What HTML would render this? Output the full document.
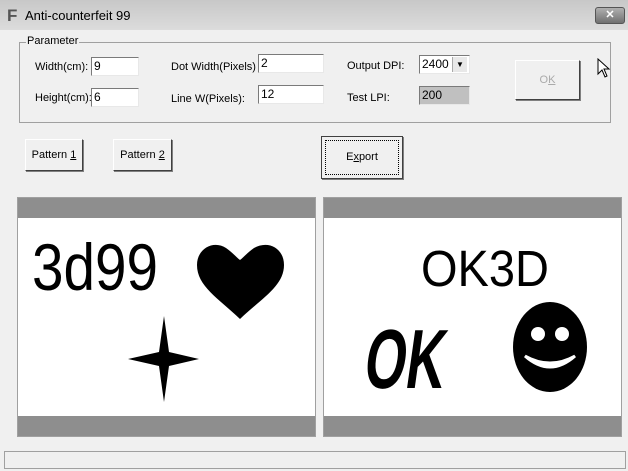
<!DOCTYPE html><html><head><style>
body{margin:0;width:628px;height:471px;background:#f0f0f0;font-family:"Liberation Sans",sans-serif;font-size:11px;position:relative;overflow:hidden}
.a{position:absolute}
.tb{left:0;top:0;width:628px;height:30px;background:linear-gradient(#c8c8c8,#dcdcdc)}
.in{background:#fff;border:1px solid;border-color:#7a7a7a #e8e8e8 #e8e8e8 #7a7a7a;height:17px;line-height:17px;padding-left:2px;font-size:12px}
.btn{border:1px solid;border-color:#fff #404040 #404040 #fff;box-shadow:1px 1px 0 #808080;background:#f0f0f0;text-align:center;line-height:30px}
.pan{background:#fff;border:1px solid #a0a0a0}
.bar{position:absolute;left:0;right:0;height:20px;background:#8e8e8e}
</style></head><body>
<div class="a tb"></div>
<div class="a" style="left:7px;top:6px;font:bold 17px 'Liberation Sans';color:#555">F</div>
<div class="a" style="left:25px;top:8px;font-size:13px">Anti-counterfeit 99</div>
<div class="a" style="left:595px;top:7px;width:28px;height:15px;background:linear-gradient(#b0b0b0,#707070);border:1px solid #555;border-radius:3px;color:#fff;text-align:center;font:bold 11px/15px 'Liberation Sans'">✕</div>
<div class="a" style="left:19px;top:42px;width:590px;height:79px;border:1px solid #a0a0a0"></div>
<div class="a" style="left:26px;top:35px;background:#f0f0f0;padding:0 1px">Parameter</div>
<div class="a" style="left:35px;top:61px">Width(cm):</div>
<div class="a in" style="left:91px;top:57px;width:44px">9</div>
<div class="a" style="left:35px;top:92px">Height(cm):</div>
<div class="a in" style="left:91px;top:88px;width:44px">6</div>
<div class="a" style="left:171px;top:61px">Dot Width(Pixels)</div>
<div class="a in" style="left:258px;top:54px;width:62px">2</div>
<div class="a" style="left:171px;top:93px">Line W(Pixels):</div>
<div class="a in" style="left:258px;top:85px;width:62px">12</div>
<div class="a" style="left:347px;top:60px">Output DPI:</div>
<div class="a in" style="left:419px;top:55px;width:47px">2400</div>
<div class="a" style="left:452px;top:57px;width:14px;height:15px;background:#e8e8e8;border-left:1px solid #aaa;font-size:8px;text-align:center;line-height:15px">▼</div>
<div class="a" style="left:347px;top:92px">Test LPI:</div>
<div class="a in" style="left:419px;top:86px;width:47px;background:#c0c0c0">200</div>
<div class="a btn" style="left:515px;top:60px;width:63px;height:38px;line-height:38px;color:#aaa">O<u>K</u></div>
<svg class="a" style="left:597px;top:58px" width="14" height="22"><path d="M1 1 L1 16 L5 12 L8 19 L10 18 L7 11 L12 11 Z" fill="#fff" stroke="#000"/></svg>
<div class="a btn" style="left:25px;top:139px;width:56px;height:30px">Pattern <u>1</u></div>
<div class="a btn" style="left:113px;top:139px;width:57px;height:30px">Pattern <u>2</u></div>
<div class="a btn" style="left:321px;top:136px;width:80px;height:41px;line-height:41px;border-color:#404040;outline:1px dotted #000;outline-offset:-5px">E<u>x</u>port</div>
<div class="a pan" style="left:17px;top:197px;width:297px;height:238px"><div class="bar" style="top:0"></div><div class="bar" style="bottom:0"></div>
<svg class="a" style="left:0;top:0" width="297" height="238"><text x="14" y="92" font-family="Liberation Sans" font-size="66" textLength="126" lengthAdjust="spacingAndGlyphs">3d99</text>
<path d="M222 121 C200 100 179 88 179 67 C179 50 196 42 208 50 C214 54 218 59 222 62 C226 59 230 54 236 50 C250 42 266 50 266 67 C266 88 244 100 222 121Z"/>
<path d="M146 118 L151 154 L181 161 L151 168 L146 204 L141 168 L110 161 L141 154Z"/></svg></div>
<div class="a pan" style="left:323px;top:197px;width:297px;height:238px"><div class="bar" style="top:0"></div><div class="bar" style="bottom:0"></div>
<svg class="a" style="left:0;top:0" width="297" height="238"><text x="97" y="88" font-family="Liberation Sans" font-size="51" textLength="128" lengthAdjust="spacingAndGlyphs">OK3D</text>
<text x="0" y="0" font-family="Liberation Sans" font-weight="bold" font-size="80" textLength="80" lengthAdjust="spacingAndGlyphs" transform="translate(38,190) skewX(-8) scale(1,1.05)">OK</text>
<ellipse cx="226" cy="149" rx="37" ry="45"/><circle cx="214" cy="136" r="7" fill="#fff"/><circle cx="238" cy="136" r="7" fill="#fff"/>
<path d="M201 158 Q226 180 251 158 Q226 172 201 158Z" fill="#fff" stroke="#fff" stroke-width="3"/></svg></div>
<div class="a" style="left:4px;top:451px;width:620px;height:16px;border:1px solid #a0a0a0"></div>
</body></html>
